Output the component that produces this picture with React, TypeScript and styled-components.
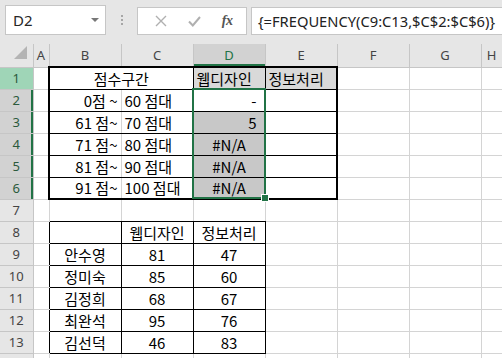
import React from 'react';
import styled, { createGlobalStyle } from 'styled-components';

type Edge = 'grid' | 'thin' | 'thick';
type Align = 'left' | 'center' | 'right';

interface CellData {
  text: string;
  align?: Align;
  fill?: string;
  span?: number;
  padRight?: number;
}

const GRID = '#d4d4d4';
const GREEN = '#217346';
const HEAD_LINE = '#c6c6c6';
const SHADE = '#c8c8c8';

const COLS = ['A', 'B', 'C', 'D', 'E', 'F', 'G', 'H'];
const COL_WIDTHS = [33, 16, 72, 72, 72, 72, 72, 72, 21];
const ROW_COUNT = 14;

const GlobalStyle = createGlobalStyle`
  html, body {
    margin: 0;
    padding: 0;
    background: #fff;
    overflow: hidden;
  }
  body {
    font-family: "Noto Sans CJK KR", "Noto Sans", sans-serif;
  }
`;

const Page = styled.div`
  width: 502px;
  height: 358px;
  overflow: hidden;
`;

const Toolbar = styled.div`
  height: 44px;
  box-sizing: border-box;
  background: #e6e6e6;
  display: flex;
  align-items: flex-start;
  padding: 5px 0 0 5px;
`;

const NameBox = styled.div`
  width: 101px;
  height: 30px;
  box-sizing: border-box;
  border: 1px solid ${HEAD_LINE};
  background: #fff;
  display: flex;
  align-items: center;
  justify-content: space-between;
  padding: 0 6px 0 7px;
  font: 15px "Noto Sans", sans-serif;
  color: #262626;
`;

const DropArrow = styled.span`
  width: 0;
  height: 0;
  border-left: 4px solid transparent;
  border-right: 4px solid transparent;
  border-top: 4px solid #777;
`;

const Grip = styled.div`
  width: 31px;
  height: 30px;
  display: flex;
  flex-direction: column;
  align-items: center;
  justify-content: center;
  gap: 2px;
`;

const GripDot = styled.span`
  width: 2px;
  height: 2px;
  background: #a6a6a6;
`;

const FxBox = styled.div`
  margin-top: 2px;
  width: 110px;
  height: 28px;
  box-sizing: border-box;
  border: 1px solid ${HEAD_LINE};
  background: #fff;
  display: flex;
  align-items: center;
  justify-content: space-around;
  padding: 0 3px 0 6px;
`;

const FxLabel = styled.span`
  font: italic bold 14px "Liberation Serif", serif;
  color: #555;
  letter-spacing: -0.5px;
`;

const FormulaBox = styled.div`
  margin: 2px 0 0 4px;
  flex: 1;
  height: 28px;
  box-sizing: border-box;
  border: 1px solid ${HEAD_LINE};
  border-right: none;
  background: #fff;
  display: flex;
  align-items: center;
  padding-left: 6px;
  font: 14.7px "Noto Sans", sans-serif;
  color: #222;
  white-space: nowrap;
  overflow: hidden;
`;

const Sheet = styled.table`
  border-collapse: collapse;
  table-layout: fixed;
  width: 502px;
`;

const Row = styled.tr`
  height: 22px;
`;

const ColHead = styled.th<{ $active?: boolean }>`
  padding: 0;
  height: 22px;
  background: ${(p) => (p.$active ? '#d2d2d2' : '#e6e6e6')};
  color: ${(p) => (p.$active ? GREEN : '#444')};
  box-shadow: ${(p) => (p.$active ? `inset 0 -2px 0 ${GREEN}` : 'none')};
  border-right: 1px solid ${HEAD_LINE};
  border-bottom: 1px solid ${HEAD_LINE};
  font: normal 13px "Noto Sans", sans-serif;
  text-align: center;
  vertical-align: middle;
`;

const Corner = styled.th`
  padding: 0;
  background: #e6e6e6;
  border-right: 1px solid ${HEAD_LINE};
  border-bottom: 1px solid ${HEAD_LINE};
  text-align: right;
  vertical-align: bottom;
  line-height: 0;
`;

const RowHead = styled.th<{ $mode: 'none' | 'current' | 'selected' }>`
  padding: 0;
  background: ${(p) => (p.$mode === 'current' ? '#9fd5b7' : p.$mode === 'selected' ? '#d2d2d2' : '#e6e6e6')};
  color: ${(p) => (p.$mode === 'none' ? '#444' : '#2b5a3c')};
  box-shadow: ${(p) => (p.$mode === 'selected' ? `inset -2px 0 0 ${GREEN}` : 'none')};
  border-right: 1px solid ${HEAD_LINE};
  border-bottom: 1px solid ${HEAD_LINE};
  font: normal 13px "Noto Sans", sans-serif;
  text-align: center;
  vertical-align: middle;
`;

const edgeCss = (e: Edge) => (e === 'thick' ? '2px solid #000' : e === 'thin' ? '1px solid #000' : `1px solid ${GRID}`);

const Cell = styled.td<{ $t: Edge; $r: Edge; $b: Edge; $l: Edge; $align: Align; $fill: string; $padRight: number }>`
  position: relative;
  padding: 0 ${(p) => p.$padRight}px 0 3px;
  border-top: ${(p) => edgeCss(p.$t)};
  border-right: ${(p) => edgeCss(p.$r)};
  border-bottom: ${(p) => edgeCss(p.$b)};
  border-left: ${(p) => edgeCss(p.$l)};
  background: ${(p) => p.$fill};
  text-align: ${(p) => p.$align};
  vertical-align: bottom;
  font-size: 15px;
  line-height: 20px;
  color: #000;
  white-space: nowrap;
`;

const Selection = styled.div<{ $rows: number }>`
  position: absolute;
  left: -2px;
  top: -2px;
  width: 74px;
  height: ${(p) => p.$rows * 22 + 1}px;
  box-sizing: border-box;
  border: 2px solid ${GREEN};
  pointer-events: none;
  z-index: 2;
`;

const FillHandle = styled.span`
  position: absolute;
  right: -5px;
  bottom: -5px;
  width: 6px;
  height: 6px;
  background: ${GREEN};
  border: 1px solid #fff;
`;

// sheet content, keyed by "row-col" (col 1 = A)
const cells: Record<string, CellData> = {
  '1-2': { text: '점수구간', align: 'center', span: 2 },
  '1-4': { text: '웹디자인', fill: '#d9d9d9' },
  '1-5': { text: '정보처리', fill: '#d9d9d9' },
  '2-2': { text: '0점 ~', align: 'right' },
  '2-3': { text: '60 점대' },
  '2-4': { text: '-', align: 'right', padRight: 8 },
  '3-2': { text: '61 점~', align: 'right' },
  '3-3': { text: '70 점대' },
  '3-4': { text: '5', align: 'right', fill: SHADE, padRight: 8 },
  '4-2': { text: '71 점~', align: 'right' },
  '4-3': { text: '80 점대' },
  '4-4': { text: '#N/A', align: 'center', fill: SHADE },
  '5-2': { text: '81 점~', align: 'right' },
  '5-3': { text: '90 점대' },
  '5-4': { text: '#N/A', align: 'center', fill: SHADE },
  '6-2': { text: '91 점~', align: 'right' },
  '6-3': { text: '100 점대' },
  '6-4': { text: '#N/A', align: 'center', fill: SHADE },
  '8-3': { text: '웹디자인', align: 'center' },
  '8-4': { text: '정보처리', align: 'center' },
};

const scores: [string, string, string][] = [
  ['안수영', '81', '47'],
  ['정미숙', '85', '60'],
  ['김정희', '68', '67'],
  ['최완석', '95', '76'],
  ['김선덕', '46', '83'],
];
scores.forEach((s, i) => {
  s.forEach((t, j) => {
    cells[`${9 + i}-${2 + j}`] = { text: t, align: 'center' };
  });
});

const inFirst = (r: number, c: number) => r >= 1 && r <= 6 && c >= 2 && c <= 5;
const inSecond = (r: number, c: number) => r >= 8 && r <= 13 && c >= 2 && c <= 4;

// edge between (r, c) and (r, c + 1)
const vEdge = (r: number, c: number): Edge => {
  const a = inFirst(r, c);
  const b = inFirst(r, c + 1);
  if (a && b) return c === 2 && r >= 2 ? 'grid' : 'thin';
  if (a || b) return 'thick';
  if (inSecond(r, c) || inSecond(r, c + 1)) return 'thin';
  return 'grid';
};

// edge between (r, c) and (r + 1, c)
const hEdge = (r: number, c: number): Edge => {
  const a = inFirst(r, c);
  const b = inFirst(r + 1, c);
  if (a && b) return 'thin';
  if (a || b) return 'thick';
  if (inSecond(r, c) || inSecond(r + 1, c)) return 'thin';
  return 'grid';
};

const CornerMark = () => (
  <svg width="16" height="17" viewBox="0 0 16 17" style={{ margin: '0 3px 4px 0' }}>
    <polygon points="13,0 13,13 0,13" fill="#b4b4b4" />
  </svg>
);

const CancelIcon = () => (
  <svg width="12" height="12" viewBox="0 0 12 12">
    <path d="M1 1 L11 11 M11 1 L1 11" stroke="#b0b0b0" strokeWidth="1.4" fill="none" />
  </svg>
);

const EnterIcon = () => (
  <svg width="13" height="11" viewBox="0 0 13 11">
    <path d="M1 5.5 L4.8 9.5 L12 1" stroke="#b0b0b0" strokeWidth="2" fill="none" />
  </svg>
);

const rowMode = (r: number): 'none' | 'current' | 'selected' => (r === 1 ? 'current' : r >= 2 && r <= 6 ? 'selected' : 'none');

const App = () => {
  const renderRow = (r: number) => {
    const tds: React.ReactNode[] = [];
    for (let c = 1; c < COLS.length + 1; c++) {
      const data = cells[`${r}-${c}`];
      const span = data?.span ?? 1;
      const last = c + span - 1;
      tds.push(
        <Cell
          key={c}
          colSpan={span}
          $t={hEdge(r - 1, c)}
          $b={hEdge(r, c)}
          $l={c === 1 ? 'grid' : vEdge(r, c - 1)}
          $r={vEdge(r, last)}
          $align={data?.align ?? 'left'}
          $fill={data?.fill ?? '#fff'}
          $padRight={data?.padRight ?? 3}
        >
          {data?.text}
          {r === 2 && c === 4 && (
            <Selection $rows={5}>
              <FillHandle />
            </Selection>
          )}
        </Cell>
      );
      c = last;
    }
    return tds;
  };

  return (
    <Page>
      <GlobalStyle />
      <Toolbar>
        <NameBox>
          D2
          <DropArrow />
        </NameBox>
        <Grip>
          <GripDot />
          <GripDot />
          <GripDot />
        </Grip>
        <FxBox>
          <CancelIcon />
          <EnterIcon />
          <FxLabel>fx</FxLabel>
        </FxBox>
        <FormulaBox>{'{=FREQUENCY(C9:C13,$C$2:$C$6)}'}</FormulaBox>
      </Toolbar>
      <Sheet>
        <colgroup>
          {COL_WIDTHS.map((w, i) => (
            <col key={i} style={{ width: w }} />
          ))}
        </colgroup>
        <thead>
          <Row>
            <Corner>
              <CornerMark />
            </Corner>
            {COLS.map((l) => (
              <ColHead key={l} $active={l === 'D'}>
                {l}
              </ColHead>
            ))}
          </Row>
        </thead>
        <tbody>
          {Array.from({ length: ROW_COUNT }, (_, i) => i + 1).map((r) => (
            <Row key={r}>
              <RowHead $mode={rowMode(r)}>{r}</RowHead>
              {renderRow(r)}
            </Row>
          ))}
        </tbody>
      </Sheet>
    </Page>
  );
};

export default App;
